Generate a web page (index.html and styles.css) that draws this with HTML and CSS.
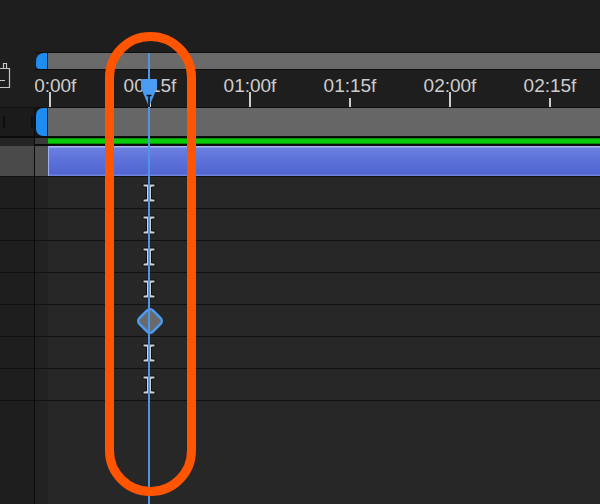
FILE: index.html
```html
<!DOCTYPE html>
<html lang="en">
<head>
  <meta charset="UTF-8">
  <meta name="viewport" content="width=device-width, initial-scale=1.0">
  <title>Timeline</title>
  <link rel="stylesheet" href="styles.css">
</head>
<body>
  <div class="panel">
    <!-- left switches column -->
    <aside class="side">
      <div class="side-head">
        <svg class="comp-icon" width="12" height="28" viewBox="0 0 12 28">
          <path d="M-2 7.5H9.5V26.5H-2M3.5 7.5V2.5H6.5V7.5M-2 19.5H5" fill="none" stroke="#c4c4c4" stroke-width="1.2"/>
        </svg>
      </div>
      <div class="side-switches"><i></i><i></i></div>
      <div class="side-gap"></div>
      <div class="side-layer"></div>
      <div class="side-row"></div>
      <div class="side-row"></div>
      <div class="side-row"></div>
      <div class="side-row"></div>
      <div class="side-row"></div>
      <div class="side-row"></div>
      <div class="side-row"></div>
      <div class="side-rest"></div>
    </aside>

    <!-- time graph -->
    <main class="timeline">
      <div class="tl-top"></div>
      <div class="band work"><span class="lead"><span class="cap"></span></span><div class="track"></div></div>
      <div class="ruler">
        <div class="ticks">
          <div class="cell"><span class="label">00:00f</span><span class="mark"><i></i></span></div>
          <div class="cell minor"><span class="label">00:15f</span><span class="mark"><i></i></span></div>
          <div class="cell"><span class="label">01:00f</span><span class="mark"><i></i></span></div>
          <div class="cell minor"><span class="label">01:15f</span><span class="mark"><i></i></span></div>
          <div class="cell"><span class="label">02:00f</span><span class="mark"><i></i></span></div>
          <div class="cell minor"><span class="label">02:15f</span><span class="mark"><i></i></span></div>
        </div>
      </div>
      <div class="band range"><span class="lead"><span class="cap"></span></span><div class="track"></div></div>
      <div class="band green"><span class="lead"></span><div class="track"></div></div>
      <div class="band layer"><span class="lead"></span><div class="track"></div></div>

      <div class="band row"><span class="lead"></span><div class="track"><span class="key"><svg width="14" height="20" viewBox="0 0 14 20"><path d="M1 1H13V4H9.5V16H13V19H1V16H4.5V4H1Z" fill="#cfcfcf" stroke="#111"/></svg></span></div></div>
      <div class="band row"><span class="lead"></span><div class="track"><span class="key"><svg width="14" height="20" viewBox="0 0 14 20"><path d="M1 1H13V4H9.5V16H13V19H1V16H4.5V4H1Z" fill="#cfcfcf" stroke="#111"/></svg></span></div></div>
      <div class="band row"><span class="lead"></span><div class="track"><span class="key"><svg width="14" height="20" viewBox="0 0 14 20"><path d="M1 1H13V4H9.5V16H13V19H1V16H4.5V4H1Z" fill="#cfcfcf" stroke="#111"/></svg></span></div></div>
      <div class="band row"><span class="lead"></span><div class="track"><span class="key"><svg width="14" height="20" viewBox="0 0 14 20"><path d="M1 1H13V4H9.5V16H13V19H1V16H4.5V4H1Z" fill="#cfcfcf" stroke="#111"/></svg></span></div></div>
      <div class="band row"><span class="lead"></span><div class="track"><span class="key"><svg width="30" height="30" viewBox="0 0 30 30"><rect x="5.5" y="5.5" width="19" height="19" rx="4" transform="rotate(45 15 15)" fill="#6a6a6a" stroke="#4b9cf2" stroke-width="2.5"/></svg></span></div></div>
      <div class="band row"><span class="lead"></span><div class="track"><span class="key"><svg width="14" height="20" viewBox="0 0 14 20"><path d="M1 1H13V4H9.5V16H13V19H1V16H4.5V4H1Z" fill="#cfcfcf" stroke="#111"/></svg></span></div></div>
      <div class="band row"><span class="lead"></span><div class="track"><span class="key"><svg width="14" height="20" viewBox="0 0 14 20"><path d="M1 1H13V4H9.5V16H13V19H1V16H4.5V4H1Z" fill="#cfcfcf" stroke="#111"/></svg></span></div></div>
      <div class="band rest"><span class="lead"></span><div class="track"></div></div>
    </main>

    <!-- current time indicator -->
    <div class="playhead">
      <svg class="playhead-head" width="16" height="28" viewBox="0 0 16 28">
        <path d="M2 0H14Q16 0 16 2V9L8 28L0 9V2Q0 0 2 0Z" fill="#4a9cf2"/>
        <path d="M5.5 16.5H10.5M8 17V28" stroke="#111" stroke-width="1.6"/>
      </svg>
    </div>

    <!-- annotation -->
    <div class="highlight"></div>
  </div>
</body>
</html>
```

FILE: styles.css
```css
body {
  margin: 0;
  background: #1e1e1e;
  font-family: "Liberation Sans", Arial, sans-serif;
}

.panel {
  position: relative;
  display: flex;
  width: 600px;
  height: 504px;
  overflow: hidden;
}

/* left column */
.side {
  width: 35px;
  display: flex;
  flex-direction: column;
}

.side > div {
  box-sizing: border-box;
  border-right: 1px solid #0b0b0b;
}

.side .side-head {
  height: 108px;
  border-right: none;
  border-bottom: 1px solid #141414;
  padding-top: 61px;
  box-sizing: border-box;
}

.comp-icon {
  display: block;
}

.side-switches {
  height: 30px;
  background: #1b1b1b;
  border-bottom: 2px solid #0c0c0c;
  display: flex;
  justify-content: space-between;
  align-items: center;
  padding: 0 1px 0 3px;
}

.side-switches i {
  width: 2px;
  height: 12px;
  background: #0e0e0e;
}

.side-gap {
  height: 8px;
  background: #242424;
}

.side-layer {
  height: 31px;
  background: #4a4a4a;
  border-bottom: 1px solid #111;
}

.side-row {
  height: 32px;
  background: #1e1e1e;
  border-bottom: 1px solid #0f0f0f;
}

.side-rest {
  flex: 1;
  background: #1e1e1e;
}

/* timeline column */
.timeline {
  flex: 1;
  display: flex;
  flex-direction: column;
  min-width: 0;
}

.tl-top {
  height: 53px;
  box-sizing: border-box;
  border-bottom: 1px solid #0e0e0e;
}

.band {
  display: flex;
  box-sizing: border-box;
}

.lead {
  width: 13px;
  flex: 0 0 13px;
  box-sizing: border-box;
}

.track {
  flex: 1;
  box-sizing: border-box;
}

.cap {
  display: block;
  width: 11px;
  height: 100%;
  margin-left: 1px;
  background: #1f8cf2;
}

.work {
  height: 17px;
  border-bottom: 1px solid #0e0e0e;
}

.work .lead {
  background: #1e1e1e;
}

.work .cap {
  border-radius: 8px 0 0 4px;
}

.work .track {
  background: #6a6a6a;
}

.range {
  height: 30px;
  border-bottom: 2px solid #0c0c0c;
}

.range .lead {
  background: #151515;
}

.range .cap {
  border-radius: 7px 0 0 7px;
}

.range .track {
  background: #666;
}

.green {
  height: 8px;
  border-bottom: 2px solid #0c0c0c;
}

.green .lead {
  background: #3b3b3b;
}

.green .track {
  background: #0acb0a;
  box-shadow: inset 0 1px #0a8f0a, inset 0 -1px #0a8f0a;
}

.layer {
  height: 31px;
  border-bottom: 1px solid #111;
}

.layer .lead {
  background: #505050;
}

.layer .track {
  border-left: 1px solid #9fb0ef;
  background: linear-gradient(to bottom, #a9b7f1 0, #a9b7f1 1px, #6b7fe0 2px, #5b70d8 50%, #5166d2 92%, #7a8be0 100%);
}

.row {
  height: 32px;
  border-bottom: 1px solid #111;
}

.row .lead,
.rest .lead {
  background: #222;
}

.row .track,
.rest .track {
  background: #272727;
  display: flex;
  align-items: center;
}

.rest {
  flex: 1;
}

.key {
  flex: 0 0 28px;
  height: 28px;
  margin-left: 87px;
  display: flex;
  align-items: center;
  justify-content: center;
}

.key svg {
  display: block;
  flex: none;
}

/* ruler */
.ruler {
  height: 38px;
  box-sizing: border-box;
  border-bottom: 1px solid #0e0e0e;
  overflow: hidden;
}

.ticks {
  display: flex;
  height: 100%;
  margin-left: -35px;
}

.cell {
  flex: 0 0 100px;
  display: flex;
  flex-direction: column;
  align-items: center;
  justify-content: flex-end;
}

.label {
  font-size: 19px;
  line-height: 14px;
  color: #cdcdcd;
}

.mark {
  height: 15px;
  margin-top: -1px;
  display: flex;
  align-items: flex-end;
}

.mark i {
  width: 2px;
  height: 15px;
  background: #cdcdcd;
}

.minor .mark i {
  height: 9px;
}

/* playhead */
.playhead {
  position: absolute;
  left: 148px;
  top: 53px;
  bottom: 0;
  width: 2px;
  background: #4b96e6;
}

.playhead-head {
  position: absolute;
  left: -7px;
  top: 26px;
}

/* orange annotation ring */
.highlight {
  position: absolute;
  left: 105px;
  top: 32px;
  width: 91px;
  height: 464px;
  box-sizing: border-box;
  border: 9px solid #ff5500;
  border-radius: 46px;
}
```
